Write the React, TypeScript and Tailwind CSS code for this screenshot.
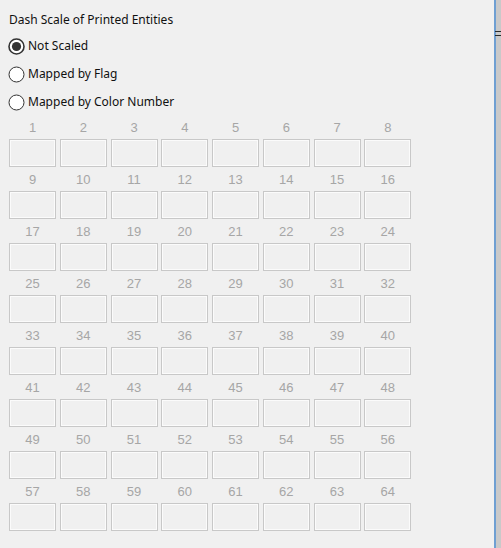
import React from 'react';

const labels = Array.from({ length: 64 }, (_, i) => i + 1);

function Radio({ checked, label }: { checked?: boolean; label: string }) {
  return (
    <div className="flex h-[28px] items-center gap-[3px]">
      <svg width="17" height="17" viewBox="0 0 17 17" className="shrink-0">
        <circle
          cx="8.5"
          cy="8.5"
          r="7.5"
          fill="#ffffff"
          stroke="#333333"
          strokeWidth={checked ? 1.6 : 1}
        />
        {checked && <circle cx="8.5" cy="8.5" r="4.6" fill="#333333" />}
      </svg>
      <span className="text-[12px] leading-4 text-[#111]">{label}</span>
    </div>
  );
}

export default function App() {
  return (
    <div className="flex h-[548px] w-[501px] overflow-hidden bg-[#f0f0f0] font-['Noto_Sans',sans-serif]">
      <div className="flex-1 pl-[9px] pt-[12px]">
        <div className="h-4 text-[12px] leading-4 text-[#111]">Dash Scale of Printed Entities</div>

        {/* Scale mode */}
        <div className="mt-[4px] -ml-[1px]">
          <Radio checked label="Not Scaled" />
          <Radio label="Mapped by Flag" />
          <Radio label="Mapped by Color Number" />
        </div>

        {/* Pen grid */}
        <div className="-mt-[1px] grid grid-cols-[repeat(8,47px)] gap-x-[3.75px]">
          {labels.map((n) => (
            <div key={n} className="flex flex-col">
              <div className="h-[24px] pt-[5px] text-center font-['Liberation_Sans',sans-serif] text-[13px] leading-[15px] text-[#a6a6a6]">
                {n}
              </div>
              <div className="h-[28px] border border-[#c8c8c8] bg-[#f0f0f0] shadow-[inset_0_0_0_1px_#fbfbfb]" />
            </div>
          ))}
        </div>
      </div>

      {/* Right edge of neighbouring pane */}
      <div className="w-[2px] bg-[#6f9fd2]" />
      <div className="relative w-[5px] bg-[#c9c9c9]">
        <div className="absolute -left-[1px] top-[31px] h-[1px] w-[7px] bg-[#2a2a2a]" />
        <div className="absolute -left-[1px] top-[35px] h-[1px] w-[7px] bg-[#2a2a2a]" />
      </div>
    </div>
  );
}
